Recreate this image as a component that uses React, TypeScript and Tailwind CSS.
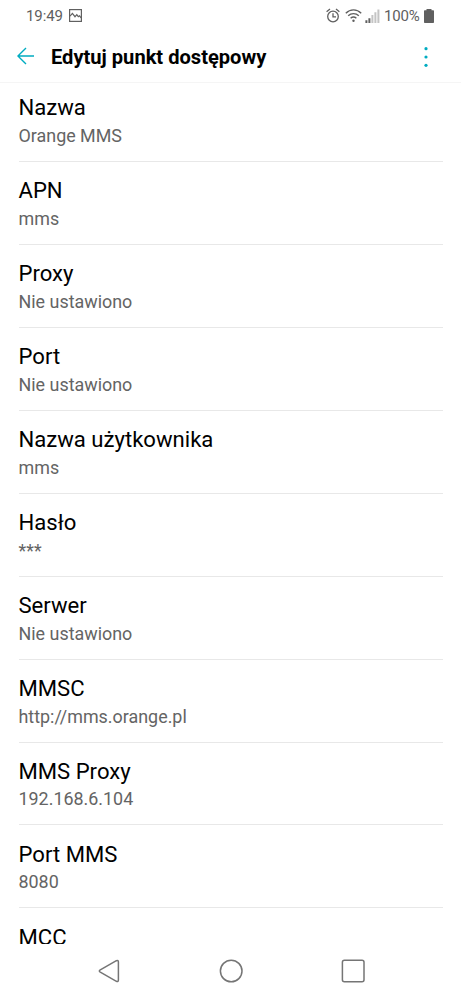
const SETTINGS = [
  { label: 'Nazwa', value: 'Orange MMS' },
  { label: 'APN', value: 'mms' },
  { label: 'Proxy', value: 'Nie ustawiono' },
  { label: 'Port', value: 'Nie ustawiono' },
  { label: 'Nazwa użytkownika', value: 'mms' },
  { label: 'Hasło', value: '***' },
  { label: 'Serwer', value: 'Nie ustawiono' },
  { label: 'MMSC', value: 'http://mms.orange.pl' },
  { label: 'MMS Proxy', value: '192.168.6.104' },
  { label: 'Port MMS', value: '8080' },
  { label: 'MCC' },
];

function StatusBar() {
  return (
    <div className="flex h-8 shrink-0 items-center justify-between pl-[26px] pr-[27px] text-[15px] leading-none text-[#606060]">
      <div className="flex items-center gap-[7px]">
        <span className="w-[36px] whitespace-nowrap tracking-[-0.1px]">19:49</span>
        <svg className="-mt-px h-[13px] w-[13px]" viewBox="0 0 13 13" fill="none" stroke="currentColor" strokeWidth="1.2">
          <rect x="0.6" y="0.6" width="11.8" height="11.8" />
          <path d="M1 7.2 3.4 4.4 6 7.7 7.8 5.6 9.3 7.7 10.6 6.8 12.2 9" />
        </svg>
      </div>
      <div className="flex items-center">
        <svg className="-mt-[2px] h-[15px] w-[14px]" viewBox="0 0 14 15" fill="none" stroke="currentColor" strokeWidth="1.3">
          <circle cx="7" cy="8.5" r="5.3" />
          <path d="M7 5.2v3.6h3M.6 3.7 4 1M10 1l3.4 2.7" />
        </svg>
        <svg className="-mt-px ml-[5px] h-[15px] w-[17px]" viewBox="0 0 17 15" fill="none" stroke="currentColor" strokeWidth="1.4">
          <path d="M.8 5.2C5.2.8 11.8.8 16.2 5.2M3.2 7.8c3-2.9 7.6-2.9 10.6 0M5.6 10.3c1.7-1.5 4.1-1.5 5.8 0" />
          <circle cx="8.5" cy="12.8" r="1.2" fill="currentColor" stroke="none" />
        </svg>
        <svg className="-mt-px ml-[3px] h-[14px] w-[15px]" viewBox="0 0 15 14">
          <path d="M.4 11.2h2V14h-2zM3.4 9.2h2V14h-2z" fill="#606060" />
          <path d="M6.4 6h2v8h-2zM9.4 3.2h2V14h-2zM12.4.4h2V14h-2z" fill="#c4c4c4" />
        </svg>
        <span className="ml-[4px] w-[36px] whitespace-nowrap tracking-[-0.15px]">100%</span>
        <svg className="-mt-px ml-[4px] h-[14px] w-[10px]" viewBox="0 0 10 14" fill="currentColor">
          <path d="M2.5 0h5v1.3h1.7q.8 0 .8.8v11.1q0 .8-.8.8H.8q-.8 0-.8-.8V2.1q0-.8.8-.8h1.7z" />
        </svg>
      </div>
    </div>
  );
}

function Header() {
  return (
    <header className="flex h-[51px] shrink-0 items-center border-b border-[#f5f5f5] pl-[17px] pr-[33px]">
      <svg className="-mt-[2px] h-[18px] w-[18px] text-[#00acc1]" viewBox="0 0 18 18" fill="none" stroke="currentColor" strokeWidth="1.4">
        <path d="M17 9H.9M9 .9.9 9 9 17.1" />
      </svg>
      <h1 className="ml-4 flex-1 whitespace-nowrap text-[20.1px] font-bold leading-6 text-black">
        Edytuj punkt dostępowy
      </h1>
      <svg className="-mt-px h-5 w-1 text-[#00acc1]" viewBox="0 0 4 20" fill="currentColor">
        <circle cx="2" cy="1.7" r="1.6" />
        <circle cx="2" cy="10" r="1.6" />
        <circle cx="2" cy="18.3" r="1.6" />
      </svg>
    </header>
  );
}

function NavBar() {
  return (
    <nav className="flex h-[55px] shrink-0 items-start justify-center gap-[98px] pt-[15px] text-[#757575]">
      <svg className="h-6 w-6" viewBox="0 0 24 24" fill="none" stroke="currentColor" strokeWidth="1.5">
        <path d="M19.4 1.7 3.3 10.8q-1.9 1.2 0 2.4l16.1 9.1q2 .8 2-1.4V3.1q0-2.2-2-1.4z" />
      </svg>
      <svg className="h-6 w-6" viewBox="0 0 24 24" fill="none" stroke="currentColor" strokeWidth="1.5">
        <circle cx="12.2" cy="12" r="10.8" />
      </svg>
      <svg className="h-6 w-6" viewBox="0 0 24 24" fill="none" stroke="currentColor" strokeWidth="1.5">
        <rect x="1.4" y="1.2" width="21.6" height="21.6" rx="2" />
      </svg>
    </nav>
  );
}

export default function App() {
  return (
    <div className="flex h-[999px] w-[461px] flex-col overflow-hidden bg-white font-['Roboto',sans-serif]">
      <StatusBar />
      <Header />
      <main className="min-h-0 flex-1 overflow-hidden pl-[18.5px] pr-[18.5px]">
        <div className="-mt-[4px]">
          {SETTINGS.map((setting) => (
            <div key={setting.label} className="h-[82.94px] border-b border-[#e8e8e8] pt-[14.4px]">
              <p className="text-[22.1px] leading-7 text-black">{setting.label}</p>
              {setting.value && (
                <p className="mt-[2.6px] text-[17.9px] leading-6 text-[#646464]">{setting.value}</p>
              )}
            </div>
          ))}
        </div>
      </main>
      <NavBar />
    </div>
  );
}
